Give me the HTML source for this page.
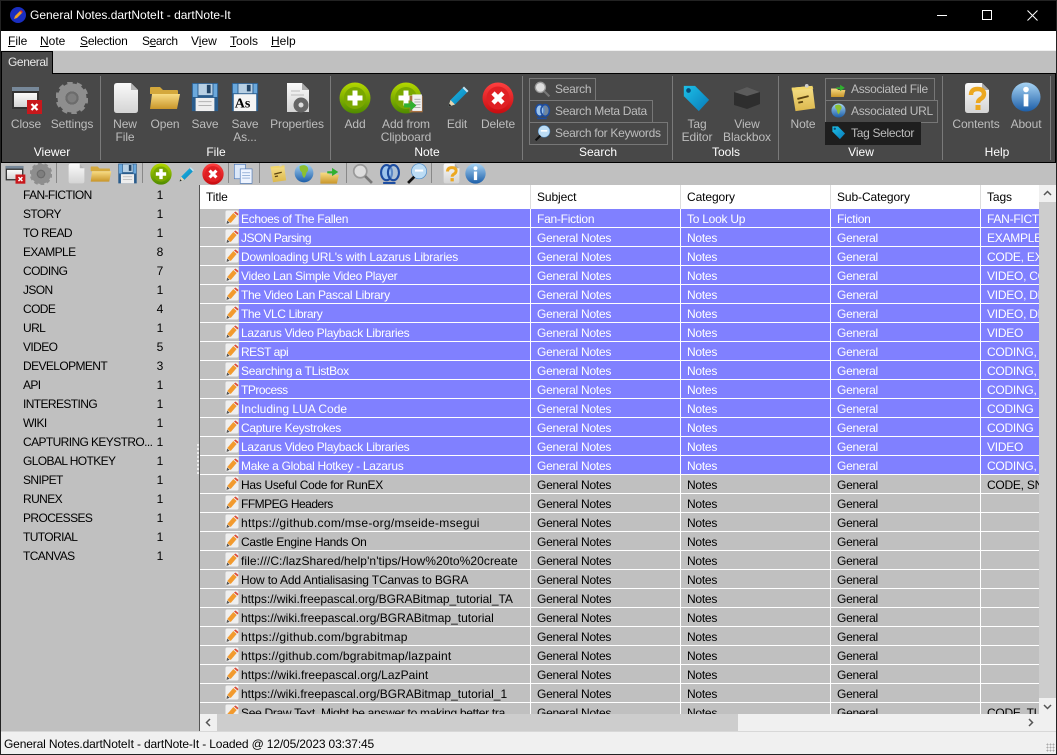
<!DOCTYPE html>
<html><head><meta charset="utf-8">
<style>
*{box-sizing:border-box}
html,body{margin:0;padding:0;width:1057px;height:755px;overflow:hidden;background:#c0c0c0}
body{position:relative;font-family:"Liberation Sans",sans-serif;font-size:12px;color:#000}
.a{position:absolute;white-space:nowrap}
svg.i{position:absolute;display:block}
u{text-decoration:underline}
.bl{position:absolute;color:#bdbdbd;text-align:center;line-height:13px;font-size:12px;white-space:nowrap;transform:translateX(-50%);letter-spacing:-.1px}
.gl{position:absolute;color:#fff;top:145px;line-height:14px;transform:translateX(-50%);white-space:nowrap}
.sep{position:absolute;top:76px;height:84px;width:1px;background:#7a7a7a}
.sb{position:absolute;border:1px solid #777;height:23px;color:#bdbdbd;line-height:21px;padding-left:25px;white-space:nowrap;letter-spacing:-.3px}
.ts{position:absolute;top:163px;height:20px;width:1px;background:#888}
.lt{position:absolute;left:23px;margin-top:1px;line-height:19px;white-space:nowrap;letter-spacing:-.6px}
.lc{position:absolute;left:150px;margin-top:1px;width:20px;text-align:center;line-height:19px}
table{border-collapse:separate;border-spacing:0;table-layout:fixed;width:931px;position:absolute;left:0;top:24px}
td{height:19px;padding:2px 0 0 6px;border-bottom:1px solid #fff;border-right:1px solid #fff;overflow:hidden;white-space:nowrap;background:#c0c0c0;line-height:16px;letter-spacing:-.25px;vertical-align:top}
td.n{padding:0;position:relative;border-right:0}
td.t{padding-left:2px;letter-spacing:-.3px}
tr.s td{background:#8080ff;color:#fff}
tr.s td.n{background:#c0c0c0}
td.n svg{position:absolute;left:25px;top:1px}
.h{position:absolute;top:0;height:24px;line-height:24px;padding-left:6px;border-right:1px solid #ddd;background:#fff;letter-spacing:-.1px}
</style></head><body>
<svg width="0" height="0" style="position:absolute">
<defs>
<linearGradient id="gf" x1="0" y1="0" x2="0" y2="1"><stop offset="0" stop-color="#f8dc84"/><stop offset="1" stop-color="#c9962a"/></linearGradient>
<linearGradient id="gn" x1="0" y1="0" x2="0" y2="1"><stop offset="0" stop-color="#f6e08a"/><stop offset="1" stop-color="#dcb84c"/></linearGradient>
<linearGradient id="gg" x1="0" y1="0" x2="0" y2="1"><stop offset="0" stop-color="#b4d800"/><stop offset="1" stop-color="#4f8a00"/></linearGradient>
<linearGradient id="gr" x1="0" y1="0" x2="0" y2="1"><stop offset="0" stop-color="#ff4040"/><stop offset="1" stop-color="#c80c10"/></linearGradient>
<linearGradient id="gb" x1="0" y1="0" x2="0" y2="1"><stop offset="0" stop-color="#a8d4f4"/><stop offset="1" stop-color="#1c5ea8"/></linearGradient>
<linearGradient id="gw" x1="0" y1="0" x2="0" y2="1"><stop offset="0" stop-color="#fafafa"/><stop offset="1" stop-color="#d4d4d4"/></linearGradient>
<linearGradient id="gt" x1="0" y1="0" x2="1" y2="1"><stop offset="0" stop-color="#1cc0e8"/><stop offset="1" stop-color="#0a7ab8"/></linearGradient>
<symbol id="close" viewBox="0 0 32 32"><rect x="1" y="3" width="27" height="22" fill="#333"/><rect x="1" y="3" width="27" height="4" fill="#789"/><rect x="3" y="9" width="23" height="14" fill="url(#gw)"/><rect x="16" y="16" width="15" height="14" fill="#c8181c"/><path d="M20.500 20l6 6M26.500 20l-6 6" stroke="#fff" stroke-width="2.200"/></symbol>
<symbol id="gear" viewBox="0 0 32 32"><circle cx="16" cy="16" r="10.500" fill="none" stroke="#8e8e8e" stroke-width="8"/><circle cx="16" cy="16" r="14.500" fill="none" stroke="#8e8e8e" stroke-width="4" stroke-dasharray="5.200 3.900"/><circle cx="16" cy="16" r="6.500" fill="#6c6c6c"/><circle cx="16" cy="16" r="4.500" fill="#7e7e7e"/></symbol>
<symbol id="new" viewBox="0 0 32 32"><path d="M7 1h14l7 7v20q0 3-3 3H7q-3 0-3-3V4q0-3 3-3z" fill="url(#gw)"/><path d="M21 1l7 7h-7z" fill="#b4b4b4"/></symbol>
<symbol id="open" viewBox="0 0 32 32"><path d="M1 6q0-1 1-1h9l3 3h14q1 0 1 1v3H1z" fill="#d4a83c"/><path d="M1 27l2-15h28l-3 15z" fill="url(#gf)"/></symbol>
<symbol id="save" viewBox="0 0 32 32"><path d="M2 1h28v30H2z" fill="#2a5c8c"/><rect x="3" y="2" width="5" height="14" fill="#6aa8dc"/><rect x="25" y="2" width="4" height="14" fill="#6aa8dc"/><rect x="9" y="2" width="15" height="12" fill="#b8d0e4"/><rect x="18" y="3" width="4" height="9" fill="#246"/><rect x="6" y="17" width="20" height="14" fill="#eee"/><path d="M9 21h14M9 25h14" stroke="#aaa"/></symbol>
<symbol id="saveas" viewBox="0 0 32 32"><path d="M2 1h28v30H2z" fill="#2a5c8c"/><rect x="3" y="2" width="5" height="10" fill="#6aa8dc"/><rect x="25" y="2" width="4" height="10" fill="#6aa8dc"/><rect x="9" y="2" width="15" height="10" fill="#b8d0e4"/><rect x="18" y="3" width="4" height="7" fill="#246"/><rect x="4" y="13" width="24" height="18" fill="#f4f4f4"/><text x="5" y="27" font-family="Liberation Serif,serif" font-weight="bold" font-size="15" fill="#000">As</text></symbol>
<symbol id="props" viewBox="0 0 32 32"><path d="M6 1h15l7 7v22H6z" fill="url(#gw)"/><path d="M21 1l7 7h-7z" fill="#aaa"/><path d="M10 9h9M10 13h13" stroke="#bbb"/><circle cx="20" cy="23" r="5" fill="none" stroke="#666" stroke-width="5"/></symbol>
<symbol id="add" viewBox="0 0 32 32"><circle cx="16" cy="16" r="15.500" fill="url(#gg)"/><circle cx="16" cy="16" r="11" fill="#7aa800"/><path d="M16 8.500v15M8.500 16h15" stroke="#fff" stroke-width="5"/></symbol>
<symbol id="del" viewBox="0 0 32 32"><circle cx="16" cy="16" r="15.500" fill="url(#gr)"/><circle cx="16" cy="16" r="11.500" fill="#e02024"/><path d="M11 11l10 10M21 11l-10 10" stroke="#fff" stroke-width="4.500"/></symbol>
<symbol id="edit" viewBox="0 0 32 32"><path d="M3 29l3-9L22 4l6 6-16 16z" fill="url(#gt)"/><path d="M3 29l3-9 6 6z" fill="#e8d4b0"/><path d="M3 29l1.500-4 2.500 2.500z" fill="#222"/><path d="M22 4l2-2 6 6-2 2z" fill="#bfe4f4"/></symbol>
<symbol id="clip" viewBox="0 0 32 32"><rect x="11" y="7" width="19" height="24" fill="#a87040"/><rect x="15" y="5" width="14" height="24" fill="#f0f0f0"/><path d="M18 12h9M18 16h9M18 20h9M18 24h9" stroke="#999"/><path d="M3 18h9v-5l9 8-9 8v-5H3z" fill="#30b030"/></symbol>
<symbol id="srch" viewBox="0 0 32 32"><circle cx="12" cy="12" r="9.500" fill="#ddd" stroke="#999" stroke-width="2.500"/><path d="M19 19l10 10" stroke="#777" stroke-width="4"/></symbol>
<symbol id="meta" viewBox="0 0 32 32"><ellipse cx="11" cy="14" rx="8" ry="11" fill="#9cc4ec" stroke="#1c4ca0" stroke-width="3"/><ellipse cx="21" cy="14" rx="8" ry="11" fill="#9cc4ec" fill-opacity=".5" stroke="#1c4ca0" stroke-width="3"/><path d="M6 29h18" stroke="#1c4ca0" stroke-width="3"/></symbol>
<symbol id="key" viewBox="0 0 32 32"><circle cx="19" cy="12" r="11" fill="#bcdcf4" stroke="#4c8cc8"/><path d="M13 11h12" stroke="#fff" stroke-width="3"/><path d="M12 20L3 29" stroke="#111" stroke-width="4"/></symbol>
<symbol id="tag" viewBox="0 0 32 32"><path d="M3 3h12l15 15-11 12L3 14z" fill="url(#gt)"/><circle cx="8" cy="8" r="2.500" fill="#074c78"/></symbol>
<symbol id="box" viewBox="0 0 32 32"><path d="M3 11l13-5 13 5v12l-13 5-13-4z" fill="#2e2e2e"/><path d="M3 11l13-5 13 5-13 4z" fill="#5c5c5c"/></symbol>
<symbol id="note" viewBox="0 0 32 32"><path d="M4 5l22-2 3 24-21 3z" fill="url(#gn)"/><path d="M4 5l22-2 1 3-23 2z" fill="#f2d668"/><path d="M10 17l12-3M11 21l5-1" stroke="#5c4410" stroke-width="2"/><circle cx="20" cy="3" r="2" fill="#ccc"/></symbol>
<symbol id="afile" viewBox="0 0 32 32"><path d="M2 14h11l2 3h14l-3 13H2z" fill="url(#gf)"/><path d="M12 12h7V7l9 6-9 6v-4h-7z" fill="#30b030"/></symbol>
<symbol id="globe" viewBox="0 0 32 32"><circle cx="16" cy="16" r="15" fill="url(#gb)"/><path d="M9 5q9-4 13 2 2 5-2 8-1 6-4 9-4-5-3-9-5-3-4-10z" fill="#8cc030"/></symbol>
<symbol id="help" viewBox="0 0 32 32"><path d="M7 1h14l7 7v20q0 3-3 3H7q-3 0-3-3V4q0-3 3-3z" fill="url(#gw)"/><path d="M21 1l7 7h-7z" fill="#aaa"/><path d="M10 13q0-6 6.500-6T23 12q0 3-3.500 5-2.500 1.500-2.500 4" fill="none" stroke="#eca820" stroke-width="4.500"/><rect x="14.500" y="23" width="5" height="5" fill="#eca820"/></symbol>
<symbol id="info" viewBox="0 0 32 32"><circle cx="16" cy="16" r="15.500" fill="url(#gb)"/><circle cx="16" cy="8" r="3" fill="#fff"/><path d="M16 13v13" stroke="#fff" stroke-width="5"/></symbol>
<symbol id="copy" viewBox="0 0 32 32"><rect x="2" y="2" width="17" height="22" fill="#dce8f8" stroke="#4c78b8"/><rect x="11" y="9" width="18" height="22" fill="#eef4ff" stroke="#4c78b8"/><path d="M14 15h12M14 19h12M14 23h12" stroke="#6c90c4"/></symbol>
<symbol id="rn" viewBox="0 0 14 15"><rect x=".5" y=".5" width="13" height="14" rx="1.500" fill="#efefef"/><path d="M4 11.500L10 4.500" stroke="#f29a2e" stroke-width="4.500"/><path d="M9 2.500l1.500-1 3 2.500-1 1.500z" fill="#dc4a38"/><path d="M1.500 14l.6-3.500 2.600 2.300z" fill="#555"/></symbol>
<symbol id="app" viewBox="0 0 16 16"><circle cx="8" cy="8" r="8" fill="#1a2ec0"/><path d="M4 12l1-3 5-5 2 2-5 5z" fill="#f2a020"/><path d="M10 4l1-1 2 2-1 1z" fill="#e03020"/></symbol>
</defs></svg>

<!-- title bar -->
<div class="a" style="left:0;top:0;width:1057px;height:31px;background:#000"></div>
<svg class="i" style="left:10px;top:7px" width="16" height="16"><use href="#app"/></svg>
<div class="a" style="left:30px;top:8px;color:#fff;line-height:15px">General Notes.dartNoteIt - dartNote-It</div>
<div class="a" style="left:937px;top:15px;width:10px;height:1px;background:#fff"></div>
<div class="a" style="left:982px;top:10px;width:10px;height:10px;border:1px solid #fff"></div>
<svg class="i" style="left:1027px;top:10px" width="11" height="11"><path d="M.5.5l10 10M10.500.5l-10 10" stroke="#fff"/></svg>

<!-- menu -->
<div class="a" style="left:0;top:31px;width:1057px;height:19px;background:#fff"></div>
<div class="a" style="left:0;top:50px;width:1057px;height:1px;background:#f0f0f0"></div>
<div class="a" style="left:8px;top:34px;line-height:15px"><u>F</u>ile</div>
<div class="a" style="left:40px;top:34px;line-height:15px"><u>N</u>ote</div>
<div class="a" style="left:80px;top:34px;line-height:15px;letter-spacing:-.2px"><u>S</u>election</div>
<div class="a" style="left:142px;top:34px;line-height:15px;letter-spacing:-.4px">S<u>e</u>arch</div>
<div class="a" style="left:191px;top:34px;line-height:15px">V<u>i</u>ew</div>
<div class="a" style="left:230px;top:34px;line-height:15px"><u>T</u>ools</div>
<div class="a" style="left:271px;top:34px;line-height:15px"><u>H</u>elp</div>

<!-- tab + ribbon -->
<div class="a" style="left:1px;top:51px;width:52px;height:23px;background:#484848;border:1px solid #000;border-bottom:0;color:#e8e8e8;line-height:21px;padding-left:6px;letter-spacing:-.4px">General</div>
<div class="a" style="left:1px;top:73px;width:1055px;height:90px;background:#484848;border:1px solid #000"></div>
<div class="a" style="left:2px;top:73px;width:50px;height:2px;background:#484848"></div>
<div class="sep" style="left:100px"></div><div class="sep" style="left:330px"></div><div class="sep" style="left:522px"></div><div class="sep" style="left:672px"></div><div class="sep" style="left:778px"></div><div class="sep" style="left:942px"></div><div class="sep" style="left:1050px"></div>

<svg class="i" style="left:11px;top:84px" width="32" height="32"><use href="#close"/></svg>
<svg class="i" style="left:56px;top:82px" width="32" height="32"><use href="#gear"/></svg>
<svg class="i" style="left:110px;top:82px" width="32" height="32"><use href="#new"/></svg>
<svg class="i" style="left:149px;top:82px" width="32" height="32"><use href="#open"/></svg>
<svg class="i" style="left:190px;top:82px" width="30" height="30"><use href="#save"/></svg>
<svg class="i" style="left:230px;top:82px" width="30" height="30"><use href="#saveas"/></svg>
<svg class="i" style="left:281px;top:82px" width="32" height="32"><use href="#props"/></svg>
<svg class="i" style="left:339px;top:82px" width="32" height="32"><use href="#add"/></svg>
<svg class="i" style="left:390px;top:82px" width="32" height="32"><use href="#add"/></svg>
<svg class="i" style="left:402px;top:91px" width="22" height="22"><use href="#clip"/></svg>
<svg class="i" style="left:446px;top:85px" width="24" height="24"><use href="#edit"/></svg>
<svg class="i" style="left:482px;top:82px" width="32" height="32"><use href="#del"/></svg>
<svg class="i" style="left:681px;top:83px" width="30" height="30"><use href="#tag"/></svg>
<svg class="i" style="left:731px;top:81px" width="32" height="32"><use href="#box"/></svg>
<svg class="i" style="left:788px;top:82px" width="30" height="32"><use href="#note"/></svg>
<svg class="i" style="left:961px;top:82px" width="32" height="32"><use href="#help"/></svg>
<svg class="i" style="left:1011px;top:82px" width="30" height="30"><use href="#info"/></svg>

<div class="bl" style="left:26px;top:118px">Close</div>
<div class="bl" style="left:72px;top:118px">Settings</div>
<div class="bl" style="left:125px;top:118px">New<br>File</div>
<div class="bl" style="left:165px;top:118px">Open</div>
<div class="bl" style="left:205px;top:118px">Save</div>
<div class="bl" style="left:245px;top:118px">Save<br>As...</div>
<div class="bl" style="left:297px;top:118px">Properties</div>
<div class="bl" style="left:355px;top:118px">Add</div>
<div class="bl" style="left:406px;top:118px">Add from<br>Clipboard</div>
<div class="bl" style="left:457px;top:118px">Edit</div>
<div class="bl" style="left:498px;top:118px">Delete</div>
<div class="bl" style="left:697px;top:118px">Tag<br>Editor</div>
<div class="bl" style="left:747px;top:118px">View<br>Blackbox</div>
<div class="bl" style="left:803px;top:118px">Note</div>
<div class="bl" style="left:976px;top:118px">Contents</div>
<div class="bl" style="left:1026px;top:118px">About</div>

<div class="gl" style="left:52px">Viewer</div>
<div class="gl" style="left:216px">File</div>
<div class="gl" style="left:427px">Note</div>
<div class="gl" style="left:598px">Search</div>
<div class="gl" style="left:726px">Tools</div>
<div class="gl" style="left:861px">View</div>
<div class="gl" style="left:997px">Help</div>

<div class="sb" style="left:529px;top:78px;width:67px">Search</div>
<div class="sb" style="left:529px;top:100px;width:124px">Search Meta Data</div>
<div class="sb" style="left:529px;top:122px;width:139px">Search for Keywords</div>
<svg class="i" style="left:534px;top:81px" width="17" height="17"><use href="#srch"/></svg>
<svg class="i" style="left:534px;top:103px" width="17" height="17"><use href="#meta"/></svg>
<svg class="i" style="left:534px;top:125px" width="17" height="17"><use href="#key"/></svg>

<div class="sb" style="left:825px;top:78px;width:110px">Associated File</div>
<div class="sb" style="left:825px;top:100px;width:113px">Associated URL</div>
<div class="sb" style="left:825px;top:122px;width:96px;background:#1e1e1e;border-color:#1e1e1e">Tag Selector</div>
<svg class="i" style="left:830px;top:81px" width="17" height="17"><use href="#afile"/></svg>
<svg class="i" style="left:831px;top:103px" width="15" height="15"><use href="#globe"/></svg>
<svg class="i" style="left:831px;top:125px" width="15" height="15"><use href="#tag"/></svg>

<!-- toolbar -->
<svg class="i" style="left:5px;top:164px" width="21" height="21"><use href="#close"/></svg>
<svg class="i" style="left:30px;top:163px" width="22" height="22"><use href="#gear"/></svg>
<div class="ts" style="left:56px"></div>
<svg class="i" style="left:66px;top:163px" width="21" height="21"><use href="#new"/></svg>
<svg class="i" style="left:90px;top:163px" width="22" height="22"><use href="#open"/></svg>
<svg class="i" style="left:117px;top:163px" width="21" height="21"><use href="#save"/></svg>
<div class="ts" style="left:142px"></div>
<svg class="i" style="left:150px;top:163px" width="22" height="22"><use href="#add"/></svg>
<svg class="i" style="left:178px;top:166px" width="17" height="17"><use href="#edit"/></svg>
<svg class="i" style="left:202px;top:163px" width="22" height="22"><use href="#del"/></svg>
<div class="ts" style="left:228px"></div>
<svg class="i" style="left:233px;top:163px" width="21" height="21"><use href="#copy"/></svg>
<div class="ts" style="left:259px"></div>
<svg class="i" style="left:268px;top:163px" width="20" height="21"><use href="#note"/></svg>
<svg class="i" style="left:294px;top:163px" width="20" height="20"><use href="#globe"/></svg>
<svg class="i" style="left:319px;top:163px" width="22" height="22"><use href="#afile"/></svg>
<div class="ts" style="left:346px"></div>
<svg class="i" style="left:352px;top:163px" width="22" height="22"><use href="#srch"/></svg>
<svg class="i" style="left:379px;top:163px" width="22" height="22"><use href="#meta"/></svg>
<svg class="i" style="left:406px;top:163px" width="22" height="22"><use href="#key"/></svg>
<div class="ts" style="left:431px"></div>
<svg class="i" style="left:441px;top:163px" width="21" height="21"><use href="#help"/></svg>
<svg class="i" style="left:465px;top:163px" width="21" height="21"><use href="#info"/></svg>

<!-- left list -->
<div class="lt" style="top:185px">FAN-FICTION</div><div class="lc" style="top:185px">1</div>
<div class="lt" style="top:204px">STORY</div><div class="lc" style="top:204px">1</div>
<div class="lt" style="top:223px">TO READ</div><div class="lc" style="top:223px">1</div>
<div class="lt" style="top:242px">EXAMPLE</div><div class="lc" style="top:242px">8</div>
<div class="lt" style="top:261px">CODING</div><div class="lc" style="top:261px">7</div>
<div class="lt" style="top:280px">JSON</div><div class="lc" style="top:280px">1</div>
<div class="lt" style="top:299px">CODE</div><div class="lc" style="top:299px">4</div>
<div class="lt" style="top:318px">URL</div><div class="lc" style="top:318px">1</div>
<div class="lt" style="top:337px">VIDEO</div><div class="lc" style="top:337px">5</div>
<div class="lt" style="top:356px">DEVELOPMENT</div><div class="lc" style="top:356px">3</div>
<div class="lt" style="top:375px">API</div><div class="lc" style="top:375px">1</div>
<div class="lt" style="top:394px">INTERESTING</div><div class="lc" style="top:394px">1</div>
<div class="lt" style="top:413px">WIKI</div><div class="lc" style="top:413px">1</div>
<div class="lt" style="top:432px">CAPTURING KEYSTRO...</div><div class="lc" style="top:432px">1</div>
<div class="lt" style="top:451px">GLOBAL HOTKEY</div><div class="lc" style="top:451px">1</div>
<div class="lt" style="top:470px">SNIPET</div><div class="lc" style="top:470px">1</div>
<div class="lt" style="top:489px">RUNEX</div><div class="lc" style="top:489px">1</div>
<div class="lt" style="top:508px">PROCESSES</div><div class="lc" style="top:508px">1</div>
<div class="lt" style="top:527px">TUTORIAL</div><div class="lc" style="top:527px">1</div>
<div class="lt" style="top:546px">TCANVAS</div><div class="lc" style="top:546px">1</div>

<!-- splitter -->
<div class="a" style="left:199px;top:185px;width:1px;height:546px;background:#555"></div>
<div class="a" style="left:197px;top:444px;width:2px;height:30px;background:repeating-linear-gradient(#eee 0 2px,transparent 2px 4px)"></div>

<!-- grid -->
<div class="a" style="left:200px;top:185px;width:839px;height:530px;overflow:hidden;background:#c0c0c0">
<div class="h" style="left:0;width:331px">Title</div>
<div class="h" style="left:331px;width:150px">Subject</div>
<div class="h" style="left:481px;width:150px">Category</div>
<div class="h" style="left:631px;width:150px">Sub-Category</div>
<div class="h" style="left:781px;width:150px">Tags</div>
<table>
<colgroup><col style="width:39px"><col style="width:292px"><col style="width:150px"><col style="width:150px"><col style="width:150px"><col style="width:150px"></colgroup>
<tr class="s"><td class="n"><svg width="14" height="15"><use href="#rn"/></svg></td><td class="t">Echoes of The Fallen</td><td>Fan-Fiction</td><td>To Look Up</td><td>Fiction</td><td>FAN-FICTION</td></tr>
<tr class="s"><td class="n"><svg width="14" height="15"><use href="#rn"/></svg></td><td class="t" style="letter-spacing:-.5px">JSON Parsing</td><td>General Notes</td><td>Notes</td><td>General</td><td>EXAMPLE, CODING</td></tr>
<tr class="s"><td class="n"><svg width="14" height="15"><use href="#rn"/></svg></td><td class="t" style="letter-spacing:-.2px">Downloading URL's with Lazarus Libraries</td><td>General Notes</td><td>Notes</td><td>General</td><td>CODE, EXAMPLE</td></tr>
<tr class="s"><td class="n"><svg width="14" height="15"><use href="#rn"/></svg></td><td class="t">Video Lan Simple Video Player</td><td>General Notes</td><td>Notes</td><td>General</td><td>VIDEO, CODE</td></tr>
<tr class="s"><td class="n"><svg width="14" height="15"><use href="#rn"/></svg></td><td class="t">The Video Lan Pascal Library</td><td>General Notes</td><td>Notes</td><td>General</td><td>VIDEO, DEVELOPMENT</td></tr>
<tr class="s"><td class="n"><svg width="14" height="15"><use href="#rn"/></svg></td><td class="t" style="letter-spacing:-.4px">The VLC Library</td><td>General Notes</td><td>Notes</td><td>General</td><td>VIDEO, DEVELOPMENT</td></tr>
<tr class="s"><td class="n"><svg width="14" height="15"><use href="#rn"/></svg></td><td class="t">Lazarus Video Playback Libraries</td><td>General Notes</td><td>Notes</td><td>General</td><td>VIDEO</td></tr>
<tr class="s"><td class="n"><svg width="14" height="15"><use href="#rn"/></svg></td><td class="t" style="letter-spacing:-.5px">REST api</td><td>General Notes</td><td>Notes</td><td>General</td><td>CODING, API</td></tr>
<tr class="s"><td class="n"><svg width="14" height="15"><use href="#rn"/></svg></td><td class="t">Searching a TListBox</td><td>General Notes</td><td>Notes</td><td>General</td><td>CODING, CODE</td></tr>
<tr class="s"><td class="n"><svg width="14" height="15"><use href="#rn"/></svg></td><td class="t" style="letter-spacing:-.5px">TProcess</td><td>General Notes</td><td>Notes</td><td>General</td><td>CODING, CODE</td></tr>
<tr class="s"><td class="n"><svg width="14" height="15"><use href="#rn"/></svg></td><td class="t" style="letter-spacing:0">Including LUA Code</td><td>General Notes</td><td>Notes</td><td>General</td><td>CODING</td></tr>
<tr class="s"><td class="n"><svg width="14" height="15"><use href="#rn"/></svg></td><td class="t">Capture Keystrokes</td><td>General Notes</td><td>Notes</td><td>General</td><td>CODING</td></tr>
<tr class="s"><td class="n"><svg width="14" height="15"><use href="#rn"/></svg></td><td class="t">Lazarus Video Playback Libraries</td><td>General Notes</td><td>Notes</td><td>General</td><td>VIDEO</td></tr>
<tr class="s"><td class="n"><svg width="14" height="15"><use href="#rn"/></svg></td><td class="t">Make a Global Hotkey - Lazarus</td><td>General Notes</td><td>Notes</td><td>General</td><td>CODING, GLOBAL</td></tr>
<tr><td class="n"><svg width="14" height="15"><use href="#rn"/></svg></td><td class="t">Has Useful Code for RunEX</td><td>General Notes</td><td>Notes</td><td>General</td><td>CODE, SNIPET</td></tr>
<tr><td class="n"><svg width="14" height="15"><use href="#rn"/></svg></td><td class="t" style="letter-spacing:-.5px">FFMPEG Headers</td><td>General Notes</td><td>Notes</td><td>General</td><td></td></tr>
<tr><td class="n"><svg width="14" height="15"><use href="#rn"/></svg></td><td class="t" style="letter-spacing:.3px">https://github.com/mse-org/mseide-msegui</td><td>General Notes</td><td>Notes</td><td>General</td><td></td></tr>
<tr><td class="n"><svg width="14" height="15"><use href="#rn"/></svg></td><td class="t">Castle Engine Hands On</td><td>General Notes</td><td>Notes</td><td>General</td><td></td></tr>
<tr><td class="n"><svg width="14" height="15"><use href="#rn"/></svg></td><td class="t" style="letter-spacing:.08px">file:///C:/lazShared/help'n'tips/How%20to%20create</td><td>General Notes</td><td>Notes</td><td>General</td><td></td></tr>
<tr><td class="n"><svg width="14" height="15"><use href="#rn"/></svg></td><td class="t" style="letter-spacing:-.15px">How to Add Antialisasing TCanvas to BGRA</td><td>General Notes</td><td>Notes</td><td>General</td><td></td></tr>
<tr><td class="n"><svg width="14" height="15"><use href="#rn"/></svg></td><td class="t" style="letter-spacing:-.04px">https://wiki.freepascal.org/BGRABitmap_tutorial_TA</td><td>General Notes</td><td>Notes</td><td>General</td><td></td></tr>
<tr><td class="n"><svg width="14" height="15"><use href="#rn"/></svg></td><td class="t" style="letter-spacing:0">https://wiki.freepascal.org/BGRABitmap_tutorial</td><td>General Notes</td><td>Notes</td><td>General</td><td></td></tr>
<tr><td class="n"><svg width="14" height="15"><use href="#rn"/></svg></td><td class="t" style="letter-spacing:.3px">https://github.com/bgrabitmap</td><td>General Notes</td><td>Notes</td><td>General</td><td></td></tr>
<tr><td class="n"><svg width="14" height="15"><use href="#rn"/></svg></td><td class="t" style="letter-spacing:.2px">https://github.com/bgrabitmap/lazpaint</td><td>General Notes</td><td>Notes</td><td>General</td><td></td></tr>
<tr><td class="n"><svg width="14" height="15"><use href="#rn"/></svg></td><td class="t" style="letter-spacing:.05px">https://wiki.freepascal.org/LazPaint</td><td>General Notes</td><td>Notes</td><td>General</td><td></td></tr>
<tr><td class="n"><svg width="14" height="15"><use href="#rn"/></svg></td><td class="t" style="letter-spacing:0">https://wiki.freepascal.org/BGRABitmap_tutorial_1</td><td>General Notes</td><td>Notes</td><td>General</td><td></td></tr>
<tr><td class="n"><svg width="14" height="15"><use href="#rn"/></svg></td><td class="t">See Draw Text, Might be answer to making better tra</td><td>General Notes</td><td>Notes</td><td>General</td><td>CODE, TUTORIAL</td></tr>
</table>
</div>

<!-- scrollbars -->
<div class="a" style="left:1039px;top:185px;width:17px;height:530px;background:#f0f0f0"></div>
<div class="a" style="left:1039px;top:202px;width:17px;height:496px;background:#cdcdcd"></div>
<svg class="i" style="left:1043px;top:190px" width="9" height="6"><path d="M1 5l3.500-3.500L8 5" fill="none" stroke="#555" stroke-width="1.500"/></svg>
<svg class="i" style="left:1043px;top:704px" width="9" height="6"><path d="M1 1l3.500 3.500L8 1" fill="none" stroke="#555" stroke-width="1.500"/></svg>
<div class="a" style="left:200px;top:714px;width:857px;height:17px;background:#f0f0f0"></div>
<div class="a" style="left:217px;top:714px;width:521px;height:17px;background:#cdcdcd"></div>
<svg class="i" style="left:205px;top:718px" width="6" height="9"><path d="M5 1L1.500 4.500 5 8" fill="none" stroke="#555" stroke-width="1.500"/></svg>
<svg class="i" style="left:1028px;top:718px" width="6" height="9"><path d="M1 1l3.500 3.500L1 8" fill="none" stroke="#555" stroke-width="1.500"/></svg>

<!-- status -->
<div class="a" style="left:0;top:731px;width:1057px;height:1px;background:#d8d8d8"></div>
<div class="a" style="left:0;top:732px;width:1057px;height:22px;background:#f0f0f0;line-height:24px;padding-left:4px;letter-spacing:-.15px">General Notes.dartNoteIt - dartNote-It - Loaded @ 12/05/2023 03:37:45</div>
<div class="a" style="left:1046px;top:743px;width:9px;height:9px;background:radial-gradient(#aaa 45%,transparent 50%) 0 0/3px 3px"></div>

<!-- window border -->
<div class="a" style="left:0;top:0;width:1057px;height:755px;border:1px solid #222;pointer-events:none"></div>
</body></html>
